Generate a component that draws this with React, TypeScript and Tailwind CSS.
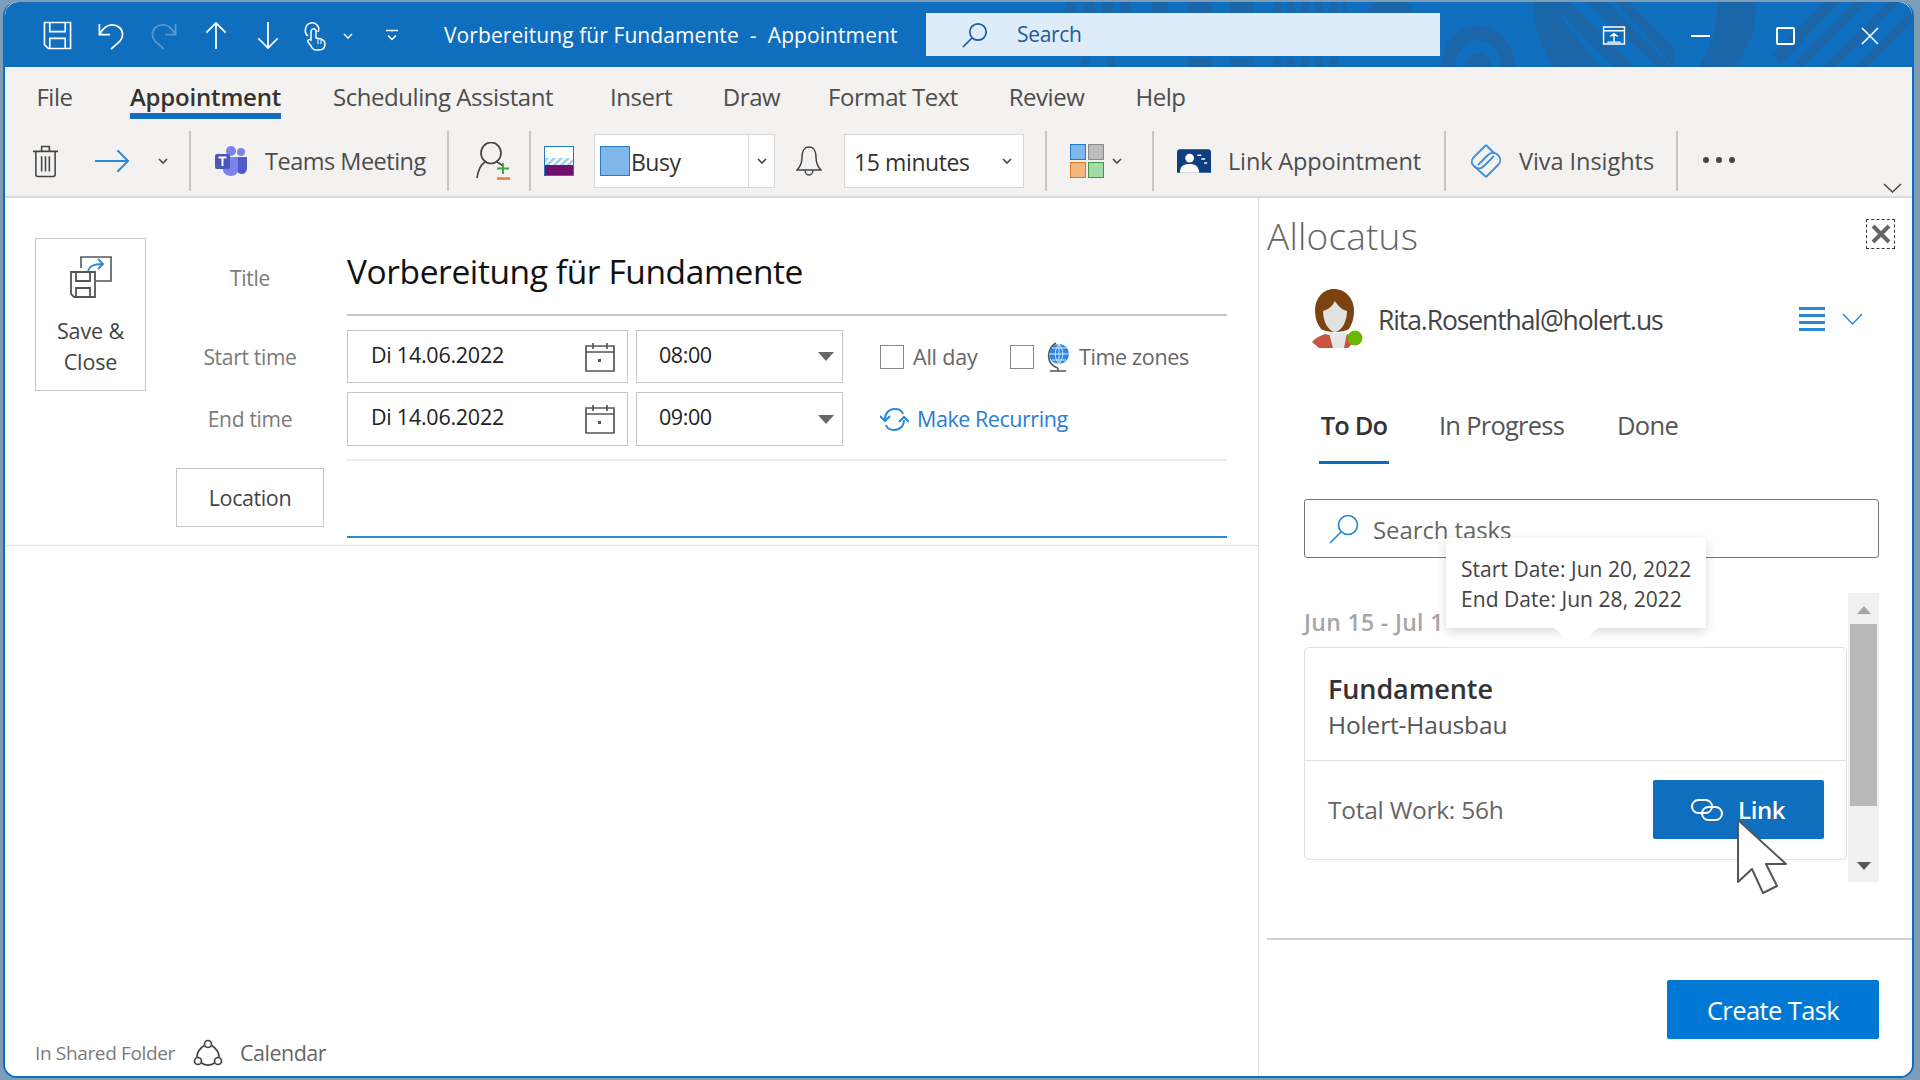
const SEP = 'h-[60px] w-[2px] shrink-0 bg-[#c8c6c4]';

const Chevron = ({ className = '', color = '#444' }: { className?: string; color?: string }) => (
  <svg viewBox="0 0 10 6" className={className} fill="none" stroke={color} strokeWidth="1.6">
    <path d="M1 1l4 4 4-4" />
  </svg>
);

const TitleDecor = () => (
  <svg className="absolute left-0 top-0 h-[65px] w-[1909px]" viewBox="0 0 1909 65" fill="#1a66a8">
    <path d="M1060 0h11v12h-11zM1079 0h11v12h-11zM1097 0h11v12h-11zM1115 0h11v12h-11zM1147 0h16v12h-16zM1183 0h24v12h-24zM1225 0h24v12h-24zM1268 0h8v12h-8zM1282 0h8v12h-8zM1296 0h8v12h-8zM1310 0h8v12h-8zM1324 0h8v12h-8zM1338 0h4v12h-4zM1360 12l10-12h32l8 12z" />
    <path d="M1076 55h8v10h-8zM1102 55h8v10h-8zM1183 55h24v10h-24zM1225 55h24v10h-24zM1268 55h8v10h-8zM1282 55h8v10h-8zM1296 55h8v10h-8zM1310 55h8v10h-8zM1324 55h8v10h-8z" />
    <path fillRule="evenodd" d="M1436 65a37 41 0 0 1 74 0h-14a23 27 0 0 0-46 0zM1460 65a13 14 0 0 1 26 0z" />
    <path d="M1529 0h35c4 3 7 6 10 9l56 56h-21l-62-62 48 62h-46c-13-18-20-40-20-65zM1580 0h22l65 65h-14zM1610 0h14l45 45v20z" />
    <path d="M1712 0h38c3 24-6 48-22 65h-34c12-19 20-41 18-65z" />
    <path d="M1767 52l53-52h14l-58 62zM1790 60l60-60h12l-65 65zM1818 65l65-65h12l-65 65zM1850 65l59-59v12l-47 47z" />
  </svg>
);

const QuickAccess = () => (
  <div className="flex items-center">
    <svg viewBox="0 0 30 30" className="ml-[38px] h-[29px] w-[29px]" fill="none" stroke="#fff" strokeWidth="1.7">
      <path d="M1.5 1.5h27v27H5.5l-4-4zM7 1.5V11h16V1.5M7 28.5V18h16v10.5" />
    </svg>
    <svg viewBox="0 0 28 30" className="ml-[25px] h-[29px] w-[28px]" fill="none" stroke="#fff" strokeWidth="1.8">
      <path d="M2 3v11h11M2 14C6 7 10 4 15 4c6 0 11 4 11 10 0 3-1 5-3 7l-9 8" />
    </svg>
    <svg viewBox="0 0 28 30" className="ml-[25px] h-[29px] w-[28px]" fill="none" stroke="#fff" strokeOpacity=".3" strokeWidth="1.8">
      <path d="M26 3v11H15M26 14C22 7 18 4 13 4 7 4 2 8 2 14c0 3 1 5 3 7l9 8" />
    </svg>
    <svg viewBox="0 0 22 30" className="ml-[27px] h-[29px] w-[22px]" fill="none" stroke="#fff" strokeWidth="1.8">
      <path d="M11 29V2M1 12L11 2l10 10" />
    </svg>
    <svg viewBox="0 0 22 30" className="ml-[30px] h-[29px] w-[22px]" fill="none" stroke="#fff" strokeWidth="1.8">
      <path d="M11 1v27M1 18l10 10 10-10" />
    </svg>
    <svg viewBox="0 0 22 30" className="ml-[25px] h-[30px] w-[22px]" fill="none" stroke="#fff" strokeWidth="1.5">
      <path d="M4 15c-3-2-3-6-2-9 1-4 8-6 11-2 2 2 2 5 1 7" />
      <path d="M7 11c0-4 5-4 5-1v7l5 1c3 1 4 2 4 5 0 4-2 6-6 6h-3c-3 0-4-2-5-4l-3-4c-1-2 1-3 3-2z" />
      <path d="M14 18v5M17 19v4" strokeWidth="1" />
    </svg>
    <Chevron className="ml-[17px] h-[6px] w-[10px]" color="#fff" />
    <svg viewBox="0 0 12 12" className="ml-[33px] h-[13px] w-[12px]" fill="none" stroke="#fff" strokeWidth="1.5">
      <path d="M0 1h12M2 6l4 4 4-4" />
    </svg>
  </div>
);

const TitleBar = () => (
  <div className="relative flex h-[65px] shrink-0 items-center overflow-hidden rounded-t-[14px] bg-[#106ebe]">
    <TitleDecor />
    <div className="relative flex w-full items-center pt-[2px]">
      <QuickAccess />
      <span className="ml-[46px] w-[482px] whitespace-pre text-[21px] tracking-[0.08px] text-white">
        Vorbereitung für Fundamente  -  Appointment
      </span>
      <div className="-mt-[2px] flex h-[43px] w-[514px] items-center bg-[#deebf9]">
        <svg viewBox="0 0 26 26" className="ml-[36px] h-[26px] w-[26px]" fill="none" stroke="#1c5a9e" strokeWidth="1.7">
          <circle cx="16" cy="10" r="8.2" />
          <path d="M10 16L1 25" />
        </svg>
        <span className="ml-[29px] text-[21px] tracking-[-0.3px] text-[#1c5a9e]">Search</span>
      </div>
      <svg viewBox="0 0 24 20" className="ml-[162px] h-[19px] w-[24px]" fill="none" stroke="#fff" strokeWidth="1.5">
        <path d="M1 1h22v18H1zM1 5h22M12 17V8M8 11l4-3 4 3M5 17h14" />
      </svg>
      <div className="ml-[65px] h-[2px] w-[19px] bg-white" />
      <div className="ml-[66px] h-[18px] w-[19px] rounded-[2px] border-[2px] border-white" />
      <svg viewBox="0 0 18 18" className="ml-[66px] h-[18px] w-[18px]" fill="none" stroke="#fff" strokeWidth="1.6">
        <path d="M1 1l16 16M17 1L1 17" />
      </svg>
    </div>
  </div>
);

const tabs = [
  { label: 'File', width: 'w-[35px]', left: 'ml-[32px]' },
  { label: 'Appointment', width: 'w-[151px]', left: 'ml-[58px]' },
  { label: 'Scheduling Assistant', width: 'w-[220px]', left: 'ml-[52px]' },
  { label: 'Insert', width: 'w-[60px]', left: 'ml-[58px]' },
  { label: 'Draw', width: 'w-[55px]', left: 'ml-[53px]' },
  { label: 'Format Text', width: 'w-[126px]', left: 'ml-[51px]' },
  { label: 'Review', width: 'w-[75px]', left: 'ml-[53px]' },
  { label: 'Help', width: 'w-[49px]', left: 'ml-[52px]' },
];

const RibbonTabs = () => (
  <div className="flex h-[64px] items-start pt-[16px]">
    {tabs.map((tab) => (
      <div key={tab.label} className={`${tab.left} ${tab.width} flex flex-col items-center`}>
        <span
          className={`whitespace-nowrap text-[24px] leading-[28px] ${
            tab.label === 'Appointment' ? 'font-semibold tracking-[-0.2px] text-[#333]' : 'tracking-[-0.45px] text-[#4d4d4d]'
          }`}
        >
          {tab.label}
        </span>
        {tab.label === 'Appointment' && <div className="mt-[2px] h-[6px] w-full bg-[#106ebe]" />}
      </div>
    ))}
  </div>
);

const TeamsIcon = () => (
  <svg viewBox="0 0 33 30" className="h-[30px] w-[33px]">
    <circle cx="26" cy="6" r="4" fill="#7b83eb" />
    <circle cx="16" cy="5" r="5" fill="#7b83eb" />
    <path d="M22 11h10v11c0 4-3 6-5 6s-5-1-5-4z" fill="#5059c9" />
    <path d="M8 11h15v13c0 3-3 6-7 6s-8-3-8-6z" fill="#7b83eb" />
    <rect x="0" y="8" width="15" height="15" rx="2" fill="#4b53bc" />
    <path d="M3.5 11.5h8M7.5 11.5V20" stroke="#fff" strokeWidth="2" />
  </svg>
);

const Toolbar = () => (
  <div className="relative flex h-[60px] items-center">
    <svg viewBox="0 0 28 34" className="ml-[27px] h-[34px] w-[27px]" fill="none" stroke="#444" strokeWidth="1.6">
      <path d="M1 7h26M10 7V2h8v5M4 7v24c0 1 1 2 2 2h16c1 0 2-1 2-2V7M10 12v16M14 12v16M18 12v16" />
    </svg>
    <svg viewBox="0 0 36 24" className="ml-[36px] h-[24px] w-[35px]" fill="none" stroke="#2b88d8" strokeWidth="2">
      <path d="M0 12h34M23 1l11 11-11 11" />
    </svg>
    <Chevron className="ml-[28px] h-[6px] w-[10px]" />
    <div className={`ml-[21px] ${SEP}`} />
    <div className="ml-[24px]">
      <TeamsIcon />
    </div>
    <span className="ml-[17px] mt-[2px] w-[161px] whitespace-nowrap text-[23.5px] tracking-[-0.5px] text-[#4d4d4d]">Teams Meeting</span>
    <div className={`ml-[21px] ${SEP}`} />
    <svg viewBox="0 0 36 38" className="ml-[27px] h-[38px] w-[36px]" fill="none">
      <ellipse cx="15" cy="11" rx="10" ry="10.500" stroke="#444" strokeWidth="1.7" />
      <path d="M9 20C4 23 2 29 1 36M21 20c2 1 4 2 6 4" stroke="#444" strokeWidth="1.7" />
      <path d="M27 21v11M21 26.500h12" stroke="#44a542" strokeWidth="2" />
      <path d="M21 36.500h13" stroke="#e8793b" strokeWidth="2.5" />
    </svg>
    <div className={`ml-[17px] ${SEP}`} />
    <div className="ml-[13px] flex h-[30px] w-[30px] flex-col border border-[#1f79c6]">
      <div className="h-[11px] bg-white" />
      <div className="h-[7px] bg-[repeating-linear-gradient(135deg,#a9d1f2_0_3px,#fff_3px_5px)]" />
      <div className="flex-1 bg-[#6f0f6e]" />
    </div>
    <div className="ml-[20px] flex h-[54px] w-[181px] items-center border border-[#d9d7d5] bg-white">
      <div className="ml-[5px] h-[30px] w-[30px] border-[1.5px] border-[#2b79c2] bg-[#7fb7e8]" />
      <span className="ml-[1px] mt-[3px] w-[117px] text-[23px] tracking-[-0.5px] text-[#333]">Busy</span>
      <div className="flex h-full flex-1 items-center justify-center border-l border-[#d9d7d5]">
        <Chevron className="h-[6px] w-[10px]" />
      </div>
    </div>
    <svg viewBox="0 0 26 30" className="ml-[21px] h-[30px] w-[26px]" fill="none" stroke="#444" strokeWidth="1.5">
      <path d="M13 1c5 0 7 5 7 10 0 5 1 9 5 13H1c4-4 5-8 5-13 0-5 2-10 7-10zM9 24c0 3 2 5 4 5s4-2 4-5" />
    </svg>
    <div className="ml-[22px] flex h-[54px] w-[180px] items-center border border-[#d9d7d5] bg-white">
      <span className="ml-[9px] mt-[3px] w-[148px] whitespace-nowrap text-[23px] tracking-[-0.4px] text-[#333]">15 minutes</span>
      <Chevron className="h-[6px] w-[10px]" />
    </div>
    <div className={`ml-[21px] ${SEP}`} />
    <div className="ml-[23px] grid grid-cols-[16px_16px] gap-[2px]">
      <div className="h-[16px] border border-[#1f79c6] bg-[#7fb7e8]" />
      <div className="h-[16px] border border-[#8a8a8a] bg-[#bdbdbd]" />
      <div className="h-[16px] border border-[#d97a26] bg-[#f3b77c]" />
      <div className="h-[16px] border border-[#3a9a46] bg-[#a3dba6]" />
    </div>
    <Chevron className="ml-[8px] h-[6px] w-[10px]" />
    <div className={`ml-[30px] ${SEP}`} />
    <svg viewBox="0 0 35 24" className="ml-[23px] h-[24px] w-[34px]">
      <path d="M3 0h29c2 0 3 1 3 3v21H12H0V3c0-2 1-3 3-3z" fill="#0f3f7f" />
      <circle cx="13" cy="9" r="4.500" fill="#fff" />
      <path d="M3 24c0-7 4-9 10-9s9 2 10 9z" fill="#fff" />
      <path d="M21 6h4M25 10h4M28 14h3" stroke="#fff" strokeWidth="1.5" />
    </svg>
    <span className="ml-[17px] mt-[2px] w-[193px] whitespace-nowrap text-[23.5px] tracking-[-0.15px] text-[#4d4d4d]">Link Appointment</span>
    <div className={`ml-[23px] ${SEP}`} />
    <svg viewBox="0 0 34 34" className="ml-[23px] h-[34px] w-[34px]" fill="none" stroke="#3f8fd8" strokeWidth="1.8">
      <path d="M17 1L5 13c-3 3-3 7 0 9 3 3 7 3 10 0L25 12" />
      <path d="M17 33l12-12c3-3 3-7 0-10-3-3-7-3-10 0L9 21" />
      <path d="M17 1l8 8M5 22l12 11" />
    </svg>
    <span className="ml-[16px] mt-[2px] w-[136px] whitespace-nowrap text-[23.5px] tracking-[-0.05px] text-[#4d4d4d]">Viva Insights</span>
    <div className={`ml-[21px] ${SEP}`} />
    <div className="ml-[25px] -mt-[2px] flex gap-[7px]">
      <div className="h-[6px] w-[6px] rounded-full bg-[#444]" />
      <div className="h-[6px] w-[6px] rounded-full bg-[#444]" />
      <div className="h-[6px] w-[6px] rounded-full bg-[#444]" />
    </div>
    <svg viewBox="0 0 19 10" className="absolute left-[1878px] top-[52px] h-[10px] w-[19px]" fill="none" stroke="#444" strokeWidth="1.4">
      <path d="M1 1l8.5 8L18 1" />
    </svg>
  </div>
);

const SaveCloseIcon = () => (
  <svg viewBox="0 0 42 42" className="h-[42px] w-[42px]" fill="none">
    <path d="M11 12V1h30v24H26" stroke="#555" strokeWidth="1.6" />
    <path d="M18 15c1-5 5-7 14-7M28 3l5 5-5 5" stroke="#2b88d8" strokeWidth="1.8" />
    <path d="M1 16h24v25H4l-3-3zM6 16v9h14v-9M6 41V32h14v9" stroke="#555" strokeWidth="1.8" />
  </svg>
);

const CalendarIcon = () => (
  <svg viewBox="0 0 30 30" className="h-[30px] w-[30px]" fill="none" stroke="#555" strokeWidth="1.7">
    <path d="M1 4h28v25H1zM1 10h28M8 1v6M22 1v6" />
    <rect x="13" y="17" width="3" height="3" fill="#555" stroke="none" />
  </svg>
);

const DateInput = ({ value }: { value: string }) => (
  <div className="flex h-full w-[281px] items-center border border-[#c8c6c4] pl-[23px] pr-[12px]">
    <span className="mb-[3px] flex-1 text-[21.5px] tracking-[-0.25px] text-[#222]">{value}</span>
    <CalendarIcon />
  </div>
);

const TimeInput = ({ value }: { value: string }) => (
  <div className="ml-[8px] flex h-full w-[207px] items-center border border-[#c8c6c4] pl-[22px] pr-[8px]">
    <span className="mb-[3px] flex-1 text-[21.5px] tracking-[-0.45px] text-[#222]">{value}</span>
    <div className="h-0 w-0 border-x-[8px] border-t-[9px] border-x-transparent border-t-[#666]" />
  </div>
);

const Checkbox = () => <div className="h-[24px] w-[24px] border border-[#8a8886]" />;

const FormLabel = ({ text, className = '' }: { text: string; className?: string }) => (
  <div className={`w-[148px] shrink-0 text-center text-[21px] tracking-[-0.3px] text-[#7a7a7a] ${className}`}>{text}</div>
);

const AppointmentForm = () => (
  <div className="ml-[30px] w-[1051px]">
    <div className="flex h-[118px]">
      <FormLabel text="Title" className="mt-[65px]" />
      <div className="ml-[23px] flex h-full flex-1 items-start border-b-2 border-[#c8c6c4]">
        <span className="mt-[50px] text-[33.5px] leading-[46px] tracking-[-0.4px] text-[#111]">Vorbereitung für Fundamente</span>
      </div>
    </div>
    <div className="mt-[14px] flex h-[53px] items-center">
      <FormLabel text="Start time" className="mt-[3px]" />
      <div className="ml-[23px] flex h-full items-center">
        <DateInput value="Di 14.06.2022" />
        <TimeInput value="08:00" />
        <div className="ml-[37px]">
          <Checkbox />
        </div>
        <span className="ml-[9px] mt-[2px] w-[67px] text-[21.5px] tracking-[-0.2px] text-[#666]">All day</span>
        <div className="ml-[30px]">
          <Checkbox />
        </div>
        <svg viewBox="0 0 24 30" className="ml-[12px] h-[30px] w-[24px]" fill="none">
          <path d="M10 1C3 5 1 13 4 20c2 3 4 5 8 6" stroke="#555" strokeWidth="1.6" />
          <circle cx="13" cy="12" r="10" fill="#2b88d8" />
          <path d="M3 12h20M13 2v20M6 6h14M6 18h14M13 2c-5 6-5 14 0 20M13 2c5 6 5 14 0 20" stroke="#d6eafa" strokeWidth="1" />
          <path d="M4 29h16M12 26v3" stroke="#555" strokeWidth="1.6" />
        </svg>
        <span className="ml-[9px] mt-[2px] text-[21.5px] tracking-[-0.35px] text-[#666]">Time zones</span>
      </div>
    </div>
    <div className="mt-[9px] flex h-[54px] items-center">
      <FormLabel text="End time" className="mt-[1px]" />
      <div className="ml-[23px] flex h-full items-center">
        <DateInput value="Di 14.06.2022" />
        <TimeInput value="09:00" />
        <svg viewBox="0 0 29 25" className="ml-[37px] h-[25px] w-[29px]" fill="none" stroke="#2b88d8" strokeWidth="2">
          <path d="M5 12c0-6 4-10 10-10 4 0 7 2 8 5M24 13c0 6-4 10-10 10-4 0-7-2-8-5" />
          <path d="M0 9l5 5 5-5M19 15l5-5 5 5" />
        </svg>
        <span className="ml-[8px] text-[21.5px] tracking-[-0.45px] text-[#2b7cd3]">Make Recurring</span>
      </div>
    </div>
    <div className="ml-[171px] mt-[13px] h-[2px] bg-[#edebe9]" />
    <div className="mt-[7px] flex h-[59px] w-[148px] items-center justify-center border border-[#c8c6c4] pt-[2px] text-[21.5px] tracking-[-0.4px] text-[#444]">
      Location
    </div>
    <div className="ml-[171px] mt-[9px] h-[2px] bg-[#2b88d8]" />
  </div>
);

const LeftPane = () => (
  <div className="flex w-[1254px] shrink-0 flex-col border-r border-[#e1dfdd] bg-white">
    <div className="flex h-[348px] border-b border-[#e1dfdd]">
      <div className="ml-[30px] mt-[40px] flex h-[153px] w-[111px] shrink-0 flex-col items-center border border-[#c8c6c4] pt-[17px]">
        <SaveCloseIcon />
        <span className="mt-[17px] text-center text-[21.5px] leading-[31px] tracking-[-0.1px] text-[#444]">
          Save &amp;
          <br />
          Close
        </span>
      </div>
      <AppointmentForm />
    </div>
    <div className="mt-auto flex h-[46px] items-center">
      <span className="ml-[30px] w-[146px] whitespace-nowrap text-[19px] tracking-[-0.35px] text-[#7a7a7a]">In Shared Folder</span>
      <svg viewBox="0 0 30 28" className="ml-[12px] h-[28px] w-[30px]" fill="none" stroke="#444" strokeWidth="1.7">
        <circle cx="15" cy="5" r="3.500" />
        <circle cx="5" cy="22" r="3.500" />
        <circle cx="25" cy="22" r="3.500" />
        <path d="M11.500 6.500C7 9 4 13 4 18.500M18.500 6.500C23 9 26 13 26 18.500M8.500 24c4 2.500 9 2.500 13 0" />
      </svg>
      <span className="ml-[17px] text-[21.5px] tracking-[-0.5px] text-[#666]">Calendar</span>
    </div>
  </div>
);

const Avatar = () => (
  <svg viewBox="0 0 53 59" className="h-[59px] w-[53px] shrink-0">
    <path d="M1 53c3-4 8-6 13-8l14 3 9-3 6 8-6 6H8z" fill="#c9543f" />
    <path d="M18 44h18l-3 15H22z" fill="#e6e6e6" />
    <path d="M23 0C12 0 4 9 4 22c0 7 2 13 6 18 6 4 22 4 28 0 3-5 5-11 5-18C43 9 34 0 23 0z" fill="#7a4310" />
    <path d="M24 12c-3 6-8 9-12 10 0 10 5 20 12 21 7-1 12-11 12-21-5-1-9-5-12-10z" fill="#e1e1df" />
    <circle cx="44" cy="49" r="7.500" fill="#6bb700" />
  </svg>
);

const TaskPanel = () => (
  <div className="relative ml-[45px] mt-[35px] flex h-[289px] w-[575px]">
    <div className="w-[543px]">
      <div className="mt-[14px] h-[30px] whitespace-nowrap text-[23px] font-semibold leading-[30px] tracking-[0.35px] text-[#a6a6a6]">Jun 15 - Jul 1</div>
      <div className="mt-[10px] h-[213px] rounded-[5px] border border-[#e1e1e1] bg-white">
        <div className="h-[113px] border-b border-[#e1e1e1] pl-[23px] pt-[23px]">
          <div className="text-[27px] font-semibold leading-[36px] tracking-[-0.1px] text-[#333]">Fundamente</div>
          <div className="text-[24.5px] leading-[36px] tracking-[-0.15px] text-[#555]">Holert-Hausbau</div>
        </div>
        <div className="flex items-start justify-between pl-[23px] pr-[22px] pt-[19px]">
          <span className="mt-[15px] text-[24.5px] leading-[30px] tracking-[-0.25px] text-[#666]">Total Work: 56h</span>
          <button className="flex h-[59px] w-[171px] items-center rounded-[2px] bg-[#106ebe] pl-[38px] text-[24px] font-semibold tracking-[-0.4px] text-white">
            <svg viewBox="0 0 32 22" className="h-[22px] w-[32px]" fill="none" stroke="#fff" strokeWidth="2">
              <rect x="1" y="1" width="20" height="13" rx="6.500" />
              <rect x="11" y="8" width="20" height="13" rx="6.500" />
            </svg>
            <span className="ml-[15px] pt-[1px]">Link</span>
          </button>
        </div>
      </div>
    </div>
    <div className="ml-[1px] flex h-full w-[31px] flex-col items-center bg-[#f0f0f0]">
      <div className="mt-[13px] h-0 w-0 border-x-[7px] border-b-[8px] border-x-transparent border-b-[#a6a6a6]" />
      <div className="mt-[10px] h-[182px] w-[27px] bg-[#b9b9b9]" />
      <div className="mt-[56px] h-0 w-0 border-x-[7px] border-t-[8px] border-x-transparent border-t-[#555]" />
    </div>

    <div className="absolute left-[142px] top-[-55px] h-[90px] w-[260px] bg-white pl-[15px] pt-[16px] text-[21px] leading-[30px] tracking-[0.05px] text-[#444] shadow-[0_3px_10px_rgba(0,0,0,0.16)]">
      <div>Start Date: Jun 20, 2022</div>
      <div>End Date: Jun 28, 2022</div>
    </div>
    <svg viewBox="0 0 44 20" className="absolute left-[250px] top-[35px] h-[20px] w-[44px]">
      <path d="M0 0h44L22 20z" fill="#fff" />
    </svg>
    <svg viewBox="0 0 50 75" className="absolute left-[433px] top-[226px] h-[75px] w-[50px]">
      <path d="M1 1v62l14-13 11 24 14-7-11-22h20z" fill="#fff" stroke="#555" strokeWidth="2" strokeLinejoin="round" />
    </svg>
  </div>
);

const RightPane = () => (
  <div className="flex flex-1 flex-col bg-white">
    <div className="flex h-[80px] justify-between pl-[8px] pr-[17px]">
      <span className="mt-[18px] text-[37px] font-light leading-[40px] tracking-[0.2px] text-[#666]">Allocatus</span>
      <div className="mt-[21px] flex h-[30px] w-[29px] items-center justify-center border border-dashed border-[#333]">
        <svg viewBox="0 0 20 20" className="h-[20px] w-[20px]" fill="none" stroke="#666" strokeWidth="4">
          <path d="M2 2l16 16M18 2L2 18" />
        </svg>
      </div>
    </div>
    <div className="ml-[52px] mt-[11px] flex h-[59px] items-center">
      <Avatar />
      <span className="ml-[14px] mt-[4px] w-[421px] text-[26.5px] tracking-[-1.1px] text-[#444]">Rita.Rosenthal@holert.us</span>
      <div className="flex w-[26px] flex-col gap-[4px]">
        <div className="h-[3px] bg-[#2b88d8]" />
        <div className="h-[3px] bg-[#2b88d8]" />
        <div className="h-[3px] bg-[#2b88d8]" />
        <div className="h-[3px] bg-[#2b88d8]" />
      </div>
      <svg viewBox="0 0 21 12" className="ml-[17px] h-[12px] w-[21px]" fill="none" stroke="#2b88d8" strokeWidth="1.4">
        <path d="M1 1l9.500 10L20 1" />
      </svg>
    </div>
    <div className="ml-[60px] mt-[55px] flex h-[61px] items-start">
      <div className="flex w-[70px] flex-col items-center">
        <span className="whitespace-nowrap text-[25.5px] font-semibold leading-[44px] tracking-[-0.85px] text-[#333]">To Do</span>
        <div className="mt-[14px] h-[3px] w-full bg-[#0f6cbd]" />
      </div>
      <span className="ml-[50px] w-[127px] whitespace-nowrap text-[25.5px] leading-[44px] tracking-[-0.75px] text-[#555]">In Progress</span>
      <span className="ml-[51px] whitespace-nowrap text-[25.5px] leading-[44px] tracking-[-0.7px] text-[#555]">Done</span>
    </div>
    <div className="ml-[45px] mt-[35px] flex h-[59px] w-[575px] items-center rounded-[3px] border border-[#777] pl-[24px]">
      <svg viewBox="0 0 30 30" className="h-[30px] w-[30px]" fill="none" stroke="#2b88d8" strokeWidth="1.7">
        <circle cx="19" cy="11" r="9.500" />
        <path d="M12 18L1 29" />
      </svg>
      <span className="ml-[14px] mt-[2px] text-[24px] tracking-[-0.1px] text-[#666]">Search tasks</span>
    </div>
    <TaskPanel />
    <div className="ml-[8px] mt-[56px] h-[2px] bg-[#d2d0ce]" />
    <button className="ml-[408px] mt-[40px] h-[59px] w-[212px] rounded-[2px] bg-[#0078d4] pt-[2px] text-[25.5px] font-medium tracking-[-0.6px] text-white">
      Create Task
    </button>
  </div>
);

export default function App() {
  return (
    <div className="h-[1080px] w-[1920px] overflow-hidden bg-[#7d9db8] px-[3px] pt-[2px] font-['Open_Sans',sans-serif] [-webkit-font-smoothing:antialiased]">
      <div className="flex h-[1076px] w-[1911px] flex-col overflow-hidden rounded-[14px] border-x-[2px] border-b-[2px] border-[#106ebe] bg-white">
        <TitleBar />
        <div className="h-[131px] shrink-0 border-b-2 border-[#dcdad8] bg-[#f3f2f1]">
          <RibbonTabs />
          <Toolbar />
        </div>
        <div className="flex flex-1 overflow-hidden">
          <LeftPane />
          <RightPane />
        </div>
      </div>
    </div>
  );
}
